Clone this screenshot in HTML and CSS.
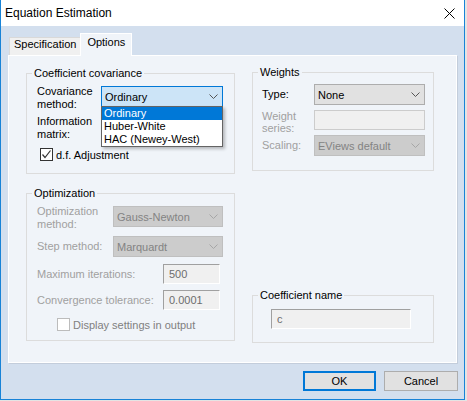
FILE: index.html
```html
<!DOCTYPE html>
<html lang="en">

<head>
  <meta charset="UTF-8">
  <title>Equation Estimation</title>
  <link rel="stylesheet" href="styles.css">
</head>

<body>
  <div class="window">
    <div class="titlebar">
      <span class="title">Equation Estimation</span>
      <svg class="close" width="11" height="11" viewBox="0 0 11 11">
        <path d="M0.5 0.5L10.5 10.5M10.5 0.5L0.5 10.5" stroke="#000" stroke-width="1" fill="none" />
      </svg>
    </div>
    <div class="client">
      <div class="tabs">
        <div class="tab">Specification</div>
        <div class="tab active">Options</div>
      </div>
      <div class="panel">
        <div class="col left">
          <fieldset class="group cov">
            <legend>Coefficient covariance</legend>
            <div class="body">
              <div class="row two">
                <div class="lbl">Covariance<br>method:</div>
                <div class="combo focus">
                  <span>Ordinary</span>
                  <svg width="9" height="5" viewBox="0 0 9 5"><polyline points="0.5,0.5 4.5,4.5 8.5,0.5" /></svg>
                  <ul class="droplist">
                    <li class="sel">Ordinary</li>
                    <li>Huber-White</li>
                    <li>HAC (Newey-West)</li>
                  </ul>
                </div>
              </div>
              <div class="row two info">
                <div class="lbl">Information<br>matrix:</div>
                <!-- covered by the open list above -->
                <div class="combo"></div>
              </div>
              <div class="check on dfadj">
                <span class="box"><svg width="11" height="11" viewBox="0 0 11 11"><polyline points="1.5,5.5 4,8.5 9.5,1.5" /></svg></span>
                <span>d.f. Adjustment</span>
              </div>
            </div>
          </fieldset>

          <fieldset class="group opt">
            <legend>Optimization</legend>
            <div class="body">
              <div class="row two">
                <div class="lbl dis">Optimization<br>method:</div>
                <div class="combo off">
                  <span>Gauss-Newton</span>
                  <svg width="9" height="5" viewBox="0 0 9 5"><polyline points="0.5,0.5 4.5,4.5 8.5,0.5" /></svg>
                </div>
              </div>
              <div class="row step">
                <div class="lbl dis">Step method:</div>
                <div class="combo off">
                  <span>Marquardt</span>
                  <svg width="9" height="5" viewBox="0 0 9 5"><polyline points="0.5,0.5 4.5,4.5 8.5,0.5" /></svg>
                </div>
              </div>
              <div class="row num maxit">
                <div class="lbl dis">Maximum iterations:</div>
                <div class="edit">500</div>
              </div>
              <div class="row num conv">
                <div class="lbl dis">Convergence tolerance:</div>
                <div class="edit">0.0001</div>
              </div>
              <div class="check disp">
                <span class="box"></span>
                <span>Display settings in output</span>
              </div>
            </div>
          </fieldset>
        </div>

        <div class="col right">
          <fieldset class="group weights">
            <legend>Weights</legend>
            <div class="body">
              <div class="row type">
                <div class="lbl">Type:</div>
                <div class="combo">
                  <span>None</span>
                  <svg width="9" height="5" viewBox="0 0 9 5"><polyline points="0.5,0.5 4.5,4.5 8.5,0.5" /></svg>
                </div>
              </div>
              <div class="row series">
                <div class="lbl dis">Weight<br>series:</div>
                <div class="edit flat"></div>
              </div>
              <div class="row scaling">
                <div class="lbl dis">Scaling:</div>
                <div class="combo off">
                  <span>EViews default</span>
                  <svg width="9" height="5" viewBox="0 0 9 5"><polyline points="0.5,0.5 4.5,4.5 8.5,0.5" /></svg>
                </div>
              </div>
            </div>
          </fieldset>

          <fieldset class="group coefname">
            <legend>Coefficient name</legend>
            <div class="body">
              <div class="edit">c</div>
            </div>
          </fieldset>
        </div>
      </div>
      <div class="footer">
        <button class="btn default">OK</button>
        <button class="btn">Cancel</button>
      </div>
    </div>
  </div>
</body>

</html>
```

FILE: styles.css
```css
* {
  box-sizing: border-box;
}

body {
  margin: 0;
  background: #e4e4e4;
  font-family: "Liberation Sans", Arial, sans-serif;
  font-size: 11px;
  color: #000;
}

.window {
  width: 465px;
  height: 400px;
  border: 1px solid #1883d7;
  border-top: 0;
  background: #d3dfee;
  display: flex;
  flex-direction: column;
}

.titlebar {
  height: 26px;
  flex: none;
  background: #fff;
  display: flex;
  align-items: center;
  justify-content: space-between;
  padding: 0 9px 0 4px;
  font-size: 12px;
}

.close {
  display: block;
}

.client {
  flex: 1;
  padding: 7px 7px 0;
  display: flex;
  flex-direction: column;
}

/* tabs */
.tabs {
  display: flex;
  align-items: flex-end;
  height: 22px;
  padding-left: 1px;
}

.tab {
  height: 18px;
  padding: 0 4px;
  line-height: 13px;
  background: #f0f0f0;
  border: 1px solid #d9d9d9;
  border-bottom: 0;
}

.tab.active {
  position: relative;
  z-index: 1;
  height: 23px;
  margin: 0 0 -1px -1px;
  padding: 2px 6px 0;
  background: #f0f4f9;
  border-color: #fff;
}

.panel {
  height: 308px;
  background: #f0f4f9;
  border: 1px solid #fff;
  box-shadow: 1px 1px 0 #c3cddb;
  display: flex;
  gap: 17px;
  padding: 10px 22px 19px 17px;
}

.col {
  display: flex;
  flex-direction: column;
}

.left {
  width: 209px;
}

.right {
  width: 182px;
  margin-top: -1px;
}

/* group boxes */
.group {
  margin: 0;
  padding: 0;
  min-width: 0;
  border: 1px solid #dcdcdc;
}

.group legend {
  margin-left: 5px;
  padding: 0 2px;
  line-height: 15px;
}

.row {
  display: flex;
  align-items: center;
}

.row.two {
  align-items: flex-start;
  height: 26px;
}

.row.two .combo {
  margin-top: 1px;
}

.lbl {
  flex: none;
  line-height: 13px;
}

.dis {
  color: #a0a0a0;
}

.cov .body {
  padding: 4px 11px 12px 10px;
}

.cov .lbl {
  width: 64px;
}

.cov .combo {
  width: 122px;
}

.info {
  margin-top: 4px;
}

.dfadj {
  margin-top: 7px;
  margin-left: 3px;
}

.opt {
  margin-top: 12px;
}

.opt .body {
  padding: 4px 11px 9px 10px;
}

.opt .lbl {
  width: 76px;
}

.opt .combo {
  width: 110px;
}

.step {
  margin-top: 5px;
}

.opt .num .lbl {
  width: 126px;
}

.opt .edit {
  width: 57px;
}

.maxit {
  margin-top: 7px;
}

.conv {
  margin-top: 6px;
}

.disp {
  margin-top: 8px;
  margin-left: 20px;
  color: #808080;
}

.weights .body {
  padding: 4px 8px 14px 9px;
}

.weights .lbl {
  width: 52px;
}

.weights .combo,
.weights .edit {
  width: 111px;
}

.series {
  margin-top: 5px;
  height: 20px;
  align-items: flex-start;
}

.series .lbl {
  line-height: 12px;
}

.scaling {
  margin-top: 5px;
}

.coefname {
  margin-top: auto;
}

.coefname .body {
  padding: 6px 0 13px 18px;
}

.coefname .edit {
  width: 140px;
}

/* controls */
.combo {
  position: relative;
  height: 21px;
  flex: none;
  display: flex;
  align-items: center;
  justify-content: space-between;
  padding: 0 4px 0 3px;
  background: #e1e1e1;
  border: 1px solid #adadad;
  white-space: nowrap;
}

.combo svg {
  flex: none;
  fill: none;
  stroke: #555;
  stroke-width: 1;
}

.combo.focus {
  z-index: 2;
  background: #cce4f7;
  border-color: #0078d7;
}

.combo.off {
  background: #cccccc;
  border-color: #bfbfbf;
  color: #838383;
}

.combo.off svg {
  stroke: #a6a6a6;
}

.droplist {
  position: absolute;
  left: -1px;
  right: -1px;
  top: 100%;
  margin: 0;
  padding: 0;
  list-style: none;
  background: #fff;
  border: 1px solid #646464;
  box-shadow: 2px 2px 3px rgba(0, 0, 0, .25);
  color: #000;
}

.droplist li {
  line-height: 13px;
  padding-left: 2px;
}

.droplist li.sel {
  background: #0078d7;
  color: #fff;
}

.edit {
  height: 20px;
  flex: none;
  padding-left: 5px;
  line-height: 18px;
  background: #f0f0f0;
  border: 1px solid;
  border-color: #a0a0a0 #fff #fff #a0a0a0;
  color: #6d6d6d;
}

.edit.flat {
  border-color: #cccccc;
}

.check {
  display: flex;
  align-items: center;
  gap: 3px;
}

.check .box {
  width: 13px;
  height: 13px;
  flex: none;
  background: #fff;
  border: 1px solid #bcbcbc;
}

.check.on .box {
  border-color: #333;
}

.check .box svg {
  display: block;
  fill: none;
  stroke: #333;
  stroke-width: 1.2;
}

/* buttons */
.footer {
  display: flex;
  justify-content: flex-end;
  gap: 8px;
  padding-top: 8px;
  margin-right: -1px;
}

.btn {
  width: 74px;
  height: 20px;
  padding: 0;
  font: inherit;
  color: #000;
  background: #e1e1e1;
  border: 1px solid #adadad;
}

.btn.default {
  width: 73px;
  border: 2px solid #0078d7;
}
```
